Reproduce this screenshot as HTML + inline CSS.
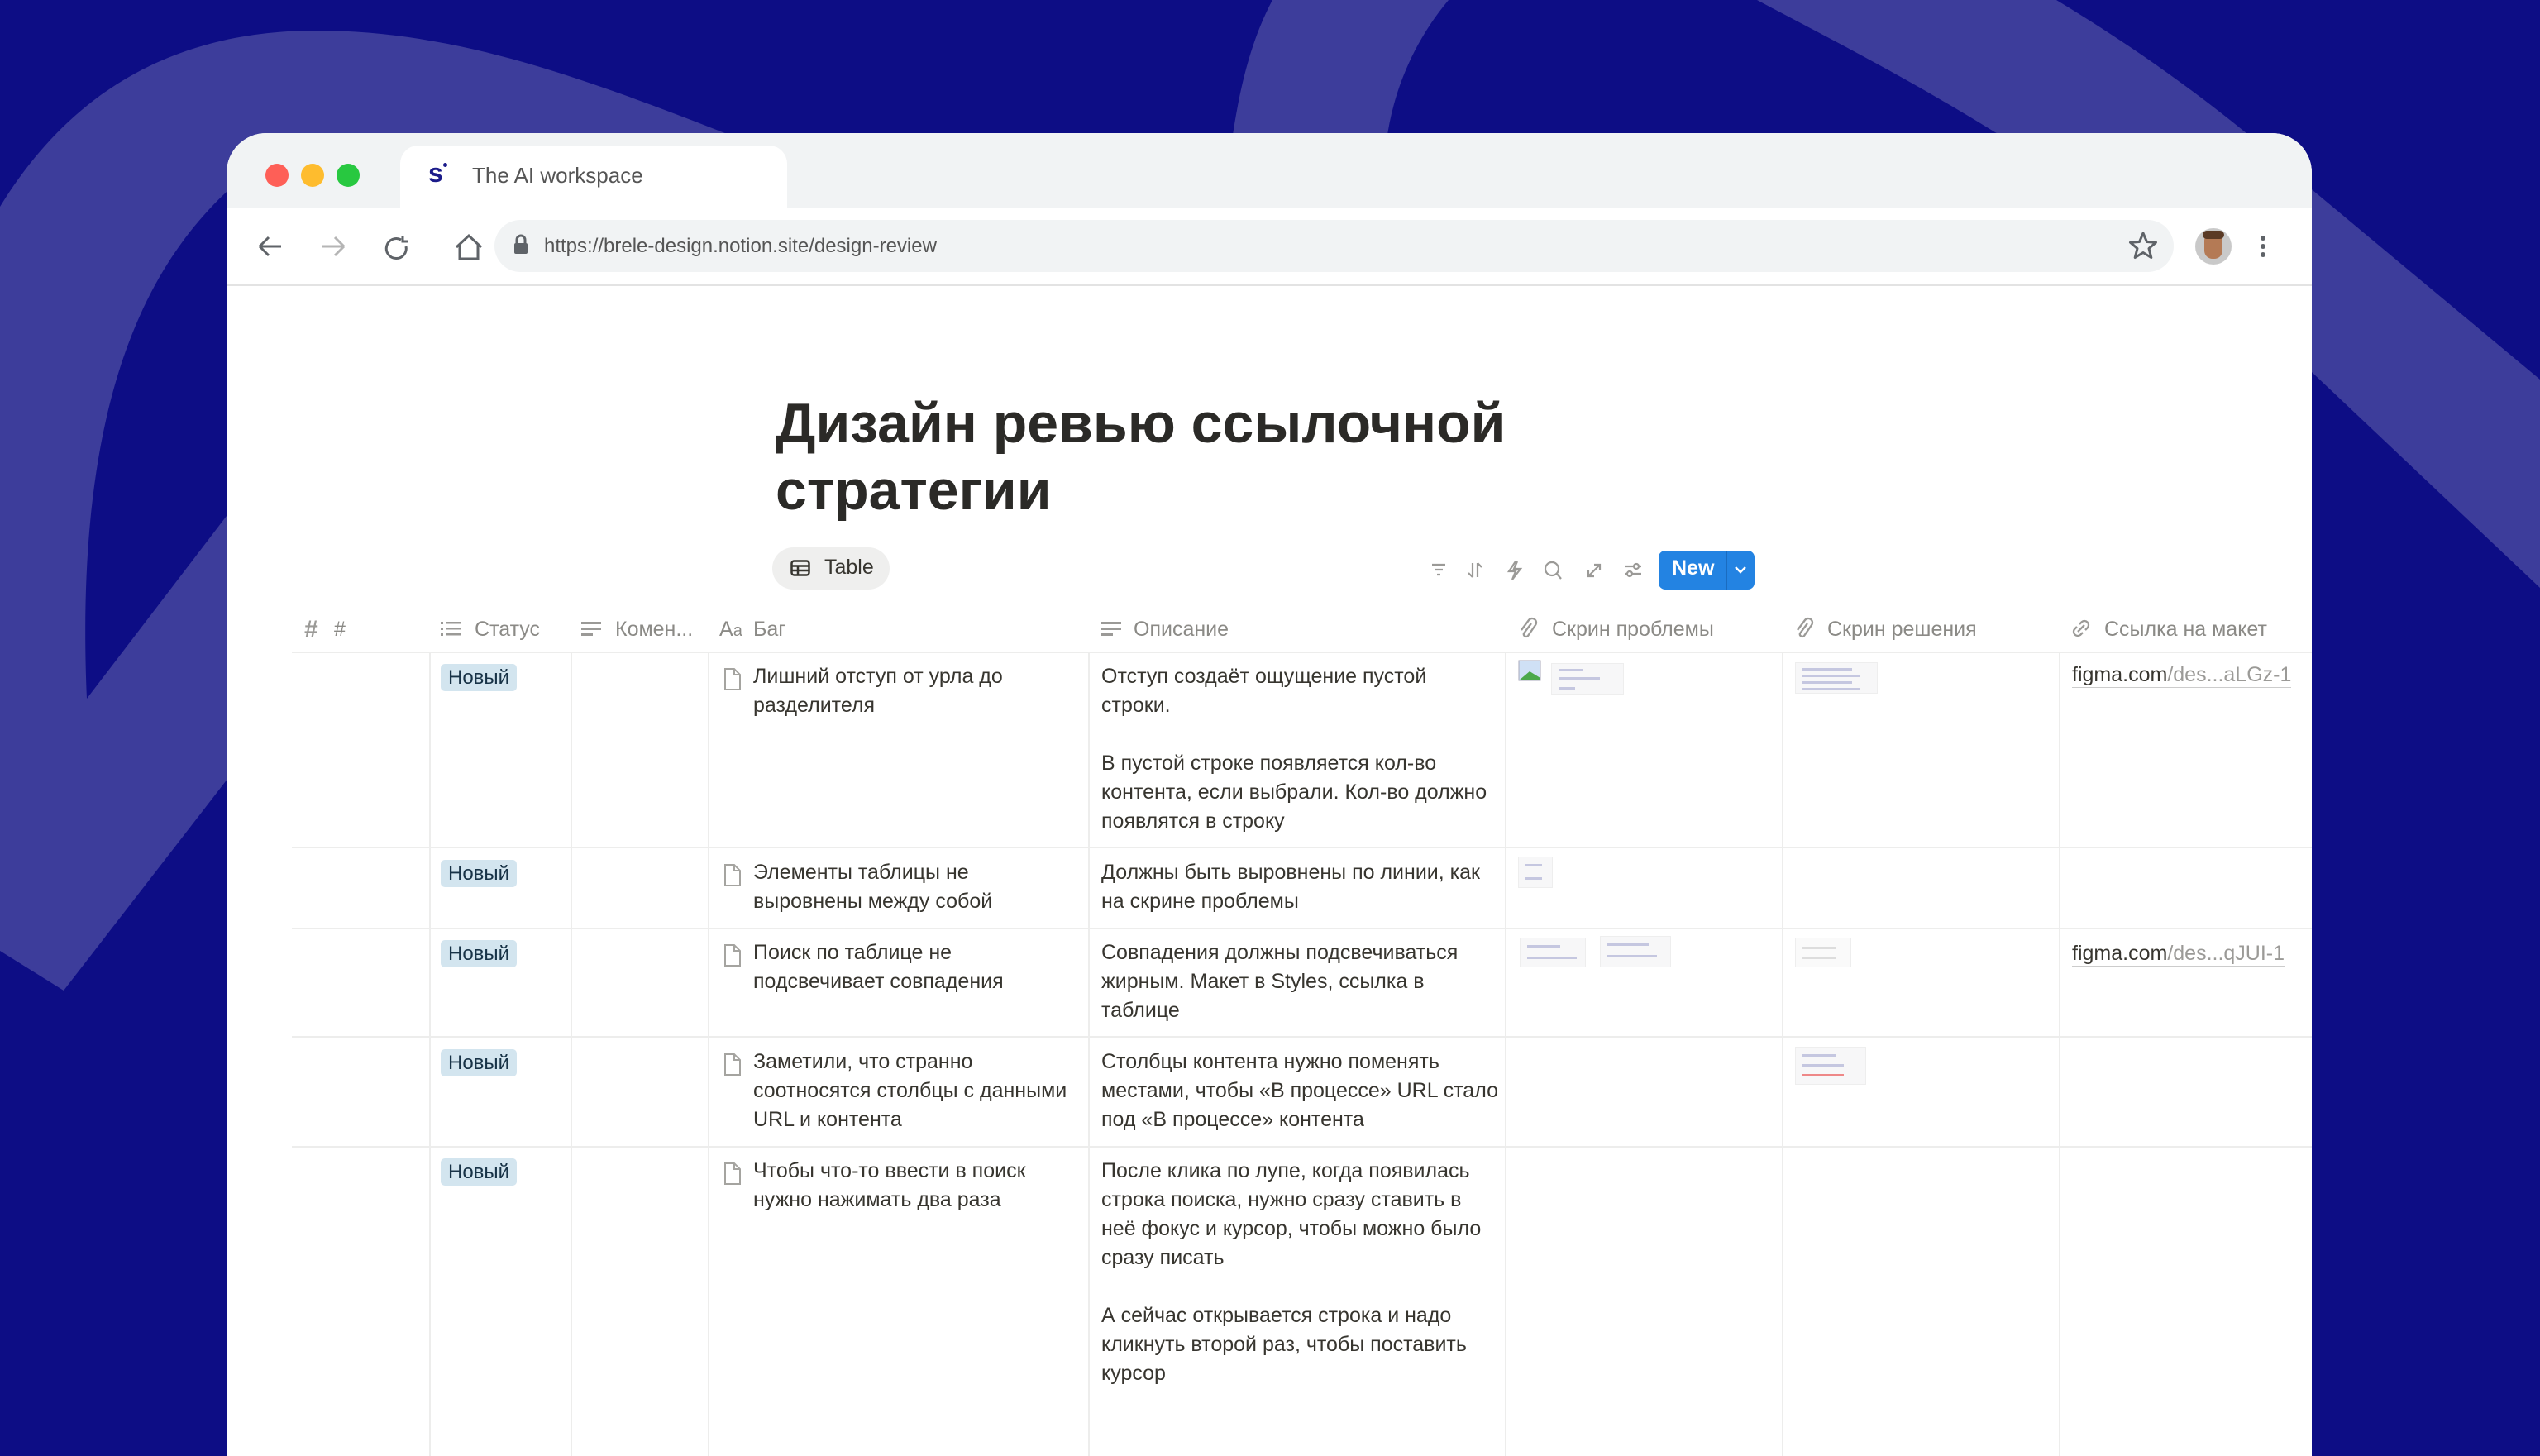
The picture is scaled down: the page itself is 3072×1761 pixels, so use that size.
<!DOCTYPE html>
<html><head><meta charset="utf-8">
<style>
*{margin:0;padding:0;box-sizing:border-box}
body{width:3072px;height:1682px;overflow:hidden;background:#0d0d85;position:relative;font-family:"Liberation Sans","Noto Sans CJK SC",sans-serif;color:#37352f}
.a{position:absolute}
.win{position:absolute;left:274px;top:161px;width:2522px;height:1600px;background:#fff;border-radius:48px 48px 0 0;overflow:hidden}
.hd{font-size:25px;color:#8b8a86;white-space:nowrap}
.t{font-size:25px;line-height:35px;color:#37352f;white-space:nowrap}
.tag{position:absolute;background:#d3e5ef;color:#183347;font-size:24px;line-height:33px;padding:0 9px;border-radius:5px}
.vl{position:absolute;width:2px;background:#ededec}
.hl{position:absolute;height:2px;background:#ededec;left:79px;width:2443px}
.thumb{position:absolute;background:#f7f7f8;border:1px solid #eee}
.thumb i{position:absolute;height:3px;background:#c5c7e0;left:8px}
</style></head><body>
<svg class="a" style="left:0;top:0" width="3072" height="1682">
<path fill="#3d3d9b" d="M0 250 C80 120 200 37 383 37 C560 37 720 100 900 170 L900 300 L274 232 C170 330 90 500 105 845 L300 590 L300 910 L77 1198 L0 1150 Z"/>
<path fill="#3d3d9b" d="M1539 0 L1752 0 C1710 50 1685 110 1677 170 L1490 170 C1500 100 1515 45 1539 0 Z"/>
<path fill="#3d3d9b" d="M2125 0 L2487 0 C2620 80 2720 160 2797 230 L3072 459 L3072 711 L2797 451 C2650 310 2540 230 2413 160 C2300 90 2200 40 2125 0 Z"/>
</svg>
<div class="win">
 <div class="a" style="left:0;top:0;width:2522px;height:90px;background:#f1f3f4"></div>
 <div class="a" style="left:210px;top:15px;width:468px;height:80px;background:#fff;border-radius:22px 22px 0 0"></div>
 <div class="a" style="left:47px;top:37px;width:28px;height:28px;border-radius:50%;background:#fe5f57"></div>
 <div class="a" style="left:90px;top:37px;width:28px;height:28px;border-radius:50%;background:#febc2e"></div>
 <div class="a" style="left:133px;top:37px;width:28px;height:28px;border-radius:50%;background:#28c840"></div>
 <div class="a" style="left:244px;top:30px;font-size:32px;font-weight:bold;color:#1b1b8a">s</div>
 <div class="a" style="left:262px;top:36px;width:5px;height:5px;border-radius:50%;background:#1b1b8a"></div>
 <div class="a" style="left:297px;top:36px;font-size:26px;color:#555">The AI workspace</div>
 <!-- nav -->
 <svg class="a" style="left:36px;top:120px" width="300" height="36" fill="none" stroke="#5f6368" stroke-width="3">
  <path d="M4 17H30M4 17L15 6M4 17L15 28"/>
  <path d="M80 17H106M106 17L95 6M106 17L95 28" stroke="#b5b5b5"/>
  <path d="M175 9A12 12 0 1 0 181 17M177 4L177 11L184 11" />
  <path d="M242 18L257 4L272 18M246 15V32H268V15"/>
 </svg>
 <div class="a" style="left:324px;top:105px;width:2031px;height:63px;background:#f1f3f4;border-radius:32px"></div>
 <svg class="a" style="left:346px;top:122px" width="20" height="26"><rect x="2" y="11" width="16" height="13" rx="2" fill="#5f6368"/><path d="M5 11V7a5 5 0 0 1 10 0v4" stroke="#5f6368" stroke-width="3" fill="none"/></svg>
 <div class="a" style="left:384px;top:123px;font-size:24px;color:#555">https://brele-design.notion.site/design-review</div>
 <svg class="a" style="left:2300px;top:118px" width="36" height="36"><path d="M18 3L22.5 13.5L33.5 14.2L25 21.5L27.8 32.5L18 26.5L8.2 32.5L11 21.5L2.5 14.2L13.5 13.5Z" fill="none" stroke="#5f6368" stroke-width="3" stroke-linejoin="round"/></svg>
 <div class="a" style="left:2381px;top:115px;width:44px;height:44px;border-radius:50%;background:#c9c9c9"></div>
 <div class="a" style="left:2392px;top:120px;width:22px;height:32px;border-radius:10px;background:#b47a55"></div>
 <div class="a" style="left:2390px;top:118px;width:26px;height:10px;border-radius:6px;background:#5a3a25"></div>
 <div class="a" style="left:2460px;top:124px;width:6px;height:6px;border-radius:50%;background:#5f6368"></div>
 <div class="a" style="left:2460px;top:134px;width:6px;height:6px;border-radius:50%;background:#5f6368"></div>
 <div class="a" style="left:2460px;top:144px;width:6px;height:6px;border-radius:50%;background:#5f6368"></div>
 <div class="a" style="left:0;top:183px;width:2522px;height:2px;background:#e3e3e3"></div>
 <!-- title -->
 <div class="a" style="left:664px;top:311px;font-size:68px;line-height:81px;font-weight:bold;color:#2b2a27;white-space:nowrap">Дизайн ревью ссылочной<br>стратегии</div>
 <div class="a" style="left:660px;top:501px;width:142px;height:51px;border-radius:26px;background:#efefee"></div>
 <svg class="a" style="left:682px;top:516px" width="24" height="20" fill="none" stroke="#37352f" stroke-width="2.5"><rect x="1.5" y="1.5" width="21" height="17" rx="3"/><path d="M1.5 7.5H22.5M1.5 13H22.5M9 7.5V18.5"/></svg>
 <div class="a" style="left:723px;top:511px;font-size:25px;color:#37352f">Table</div>
 <svg class="a" style="left:1455px;top:516px" width="290" height="26" fill="none" stroke="#9b9a97" stroke-width="2.2">
  <path d="M3 6H19M6 12H16M9 18H13"/>
  <path d="M52 4V21M52 21L47 16M58 4V21M58 4L63 9"/>
  <path d="M104 2L96 14H104L100 24L110 11H102L106 2"/>
  <circle cx="148" cy="11" r="8"/><path d="M154 17L159 23"/>
  <path d="M192 20L206 6M199 6H206V13M192 13V20H199"/>
  <path d="M236 8H256M236 17H256"/><circle cx="250" cy="8" r="3" fill="#fff"/><circle cx="242" cy="17" r="3" fill="#fff"/>
 </svg>
 <div class="a" style="left:1732px;top:505px;width:116px;height:47px;border-radius:8px;background:#2383e2"></div>
 <div class="a" style="left:1814px;top:505px;width:1px;height:47px;background:#1a6cc0"></div>
 <div class="a" style="left:1748px;top:512px;font-size:25px;font-weight:bold;color:#fff">New</div>
 <svg class="a" style="left:1822px;top:520px" width="18" height="16"><path d="M3 5L9 11L15 5" fill="none" stroke="#fff" stroke-width="2.4"/></svg>
 <!-- header -->
 <div class="a hd" style="left:94px;top:584px;font-size:30px;font-weight:bold;color:#9b9a97">#</div>
 <div class="a hd" style="left:130px;top:586px">#</div>
 <svg class="a" style="left:259px;top:589px" width="26" height="22" fill="#9b9a97"><rect x="0" y="2" width="3" height="3"/><rect x="0" y="9" width="3" height="3"/><rect x="0" y="16" width="3" height="3"/><rect x="7" y="2" width="17" height="2.5"/><rect x="7" y="9" width="17" height="2.5"/><rect x="7" y="16" width="17" height="2.5"/></svg>
 <div class="a hd" style="left:300px;top:586px">Статус</div>
 <svg class="a" style="left:429px;top:589px" width="26" height="22" fill="#9b9a97"><rect x="0" y="2" width="24" height="3"/><rect x="0" y="9" width="24" height="3"/><rect x="0" y="16" width="14" height="3"/></svg>
 <div class="a hd" style="left:470px;top:586px">Комен...</div>
 <div class="a hd" style="left:596px;top:586px">A<span style="font-size:20px">a</span></div>
 <div class="a hd" style="left:637px;top:586px">Баг</div>
 <svg class="a" style="left:1058px;top:589px" width="26" height="22" fill="#9b9a97"><rect x="0" y="2" width="24" height="3"/><rect x="0" y="9" width="24" height="3"/><rect x="0" y="16" width="14" height="3"/></svg>
 <div class="a hd" style="left:1097px;top:586px">Описание</div>
 <svg class="a" style="left:1562px;top:585px" width="24" height="28" fill="none" stroke="#9b9a97" stroke-width="2.3"><path d="M16 8L7 20a3 3 0 0 0 5 3L21 10a5 5 0 0 0-8-6L4 16"/></svg>
 <div class="a hd" style="left:1603px;top:586px">Скрин проблемы</div>
 <svg class="a" style="left:1896px;top:585px" width="24" height="28" fill="none" stroke="#9b9a97" stroke-width="2.3"><path d="M16 8L7 20a3 3 0 0 0 5 3L21 10a5 5 0 0 0-8-6L4 16"/></svg>
 <div class="a hd" style="left:1936px;top:586px">Скрин решения</div>
 <svg class="a" style="left:2230px;top:586px" width="26" height="26" fill="none" stroke="#9b9a97" stroke-width="2.3"><path d="M11 8l3-3a5 5 0 0 1 7 7l-3 3M15 18l-3 3a5 5 0 0 1-7-7l3-3M9 17l8-8"/></svg>
 <div class="a hd" style="left:2271px;top:586px">Ссылка на макет</div>
 <!-- grid lines -->
 <div class="hl" style="top:627px"></div>
 <div class="hl" style="top:863px"></div>
 <div class="hl" style="top:961px"></div>
 <div class="hl" style="top:1092px"></div>
 <div class="hl" style="top:1225px"></div>
 <div class="vl" style="left:245px;top:629px;height:1000px"></div>
 <div class="vl" style="left:416px;top:629px;height:1000px"></div>
 <div class="vl" style="left:582px;top:629px;height:1000px"></div>
 <div class="vl" style="left:1042px;top:629px;height:1000px"></div>
 <div class="vl" style="left:1546px;top:629px;height:1000px"></div>
 <div class="vl" style="left:1881px;top:629px;height:1000px"></div>
 <div class="vl" style="left:2216px;top:629px;height:1000px"></div>
 <!-- rows -->
 <div class="tag" style="left:259px;top:642px">Новый</div>
 <div class="tag" style="left:259px;top:879px">Новый</div>
 <div class="tag" style="left:259px;top:976px">Новый</div>
 <div class="tag" style="left:259px;top:1108px">Новый</div>
 <div class="tag" style="left:259px;top:1240px">Новый</div>
 <svg class="a" style="left:600px;top:646px" width="24" height="30"><path d="M3 2H14L21 9V27H3Z M14 2V9H21" fill="none" stroke="#a5a4a0" stroke-width="2"/></svg>
 <svg class="a" style="left:600px;top:883px" width="24" height="30"><path d="M3 2H14L21 9V27H3Z M14 2V9H21" fill="none" stroke="#a5a4a0" stroke-width="2"/></svg>
 <svg class="a" style="left:600px;top:980px" width="24" height="30"><path d="M3 2H14L21 9V27H3Z M14 2V9H21" fill="none" stroke="#a5a4a0" stroke-width="2"/></svg>
 <svg class="a" style="left:600px;top:1112px" width="24" height="30"><path d="M3 2H14L21 9V27H3Z M14 2V9H21" fill="none" stroke="#a5a4a0" stroke-width="2"/></svg>
 <svg class="a" style="left:600px;top:1244px" width="24" height="30"><path d="M3 2H14L21 9V27H3Z M14 2V9H21" fill="none" stroke="#a5a4a0" stroke-width="2"/></svg>
 <div class="a t" style="left:637px;top:640px">Лишний отступ от урла до<br>разделителя</div>
 <div class="a t" style="left:1058px;top:640px">Отступ создаёт ощущение пустой<br>строки.<br><br>В пустой строке появляется кол-во<br>контента, если выбрали. Кол-во должно<br>появлятся в строку</div>
 <div class="a t" style="left:637px;top:877px">Элементы таблицы не<br>выровнены между собой</div>
 <div class="a t" style="left:1058px;top:877px">Должны быть выровнены по линии, как<br>на скрине проблемы</div>
 <div class="a t" style="left:637px;top:974px">Поиск по таблице не<br>подсвечивает совпадения</div>
 <div class="a t" style="left:1058px;top:974px">Совпадения должны подсвечиваться<br>жирным. Макет в Styles, ссылка в<br>таблице</div>
 <div class="a t" style="left:637px;top:1106px">Заметили, что странно<br>соотносятся столбцы с данными<br>URL и контента</div>
 <div class="a t" style="left:1058px;top:1106px">Столбцы контента нужно поменять<br>местами, чтобы «В процессе» URL стало<br>под «В процессе» контента</div>
 <div class="a t" style="left:637px;top:1238px">Чтобы что-то ввести в поиск<br>нужно нажимать два раза</div>
 <div class="a t" style="left:1058px;top:1238px">После клика по лупе, когда появилась<br>строка поиска, нужно сразу ставить в<br>неё фокус и курсор, чтобы можно было<br>сразу писать<br><br>А сейчас открывается строка и надо<br>кликнуть второй раз, чтобы поставить<br>курсор</div>
 <div class="a t" style="left:2232px;top:640px;border-bottom:1px solid #ccc;line-height:30px">figma.com<span style="color:#9b9a97">/des...aLGz-1</span></div>
 <div class="a t" style="left:2232px;top:977px;border-bottom:1px solid #ccc;line-height:30px">figma.com<span style="color:#9b9a97">/des...qJUI-1</span></div>
 <!-- thumbs -->
 <svg class="a" style="left:1562px;top:637px" width="30" height="26"><rect x="1" y="1" width="26" height="24" fill="#cfe0f5" stroke="#aab"/><path d="M1 25L14 14L27 22V25Z" fill="#4aa84a"/></svg>
 <div class="thumb" style="left:1602px;top:641px;width:88px;height:38px"><i style="top:6px;width:30px"></i><i style="top:16px;width:50px"></i><i style="top:28px;width:20px"></i></div>
 <div class="thumb" style="left:1897px;top:640px;width:100px;height:38px"><i style="top:6px;width:60px"></i><i style="top:14px;width:70px"></i><i style="top:22px;width:60px"></i><i style="top:30px;width:70px"></i></div>
 <div class="thumb" style="left:1562px;top:875px;width:42px;height:38px"><i style="top:8px;width:20px"></i><i style="top:24px;width:20px"></i></div>
 <div class="thumb" style="left:1564px;top:973px;width:80px;height:36px"><i style="top:8px;width:40px"></i><i style="top:22px;width:60px"></i></div>
 <div class="thumb" style="left:1661px;top:971px;width:86px;height:38px"><i style="top:8px;width:50px"></i><i style="top:22px;width:60px"></i></div>
 <div class="thumb" style="left:1897px;top:973px;width:68px;height:36px;background:#fafafa"><i style="top:10px;width:40px;background:#ddd"></i><i style="top:22px;width:40px;background:#ddd"></i></div>
 <div class="thumb" style="left:1897px;top:1105px;width:86px;height:46px"><i style="top:8px;width:40px"></i><i style="top:20px;width:50px"></i><i style="top:32px;width:50px;background:#e88"></i></div>
</div>
</body></html>
